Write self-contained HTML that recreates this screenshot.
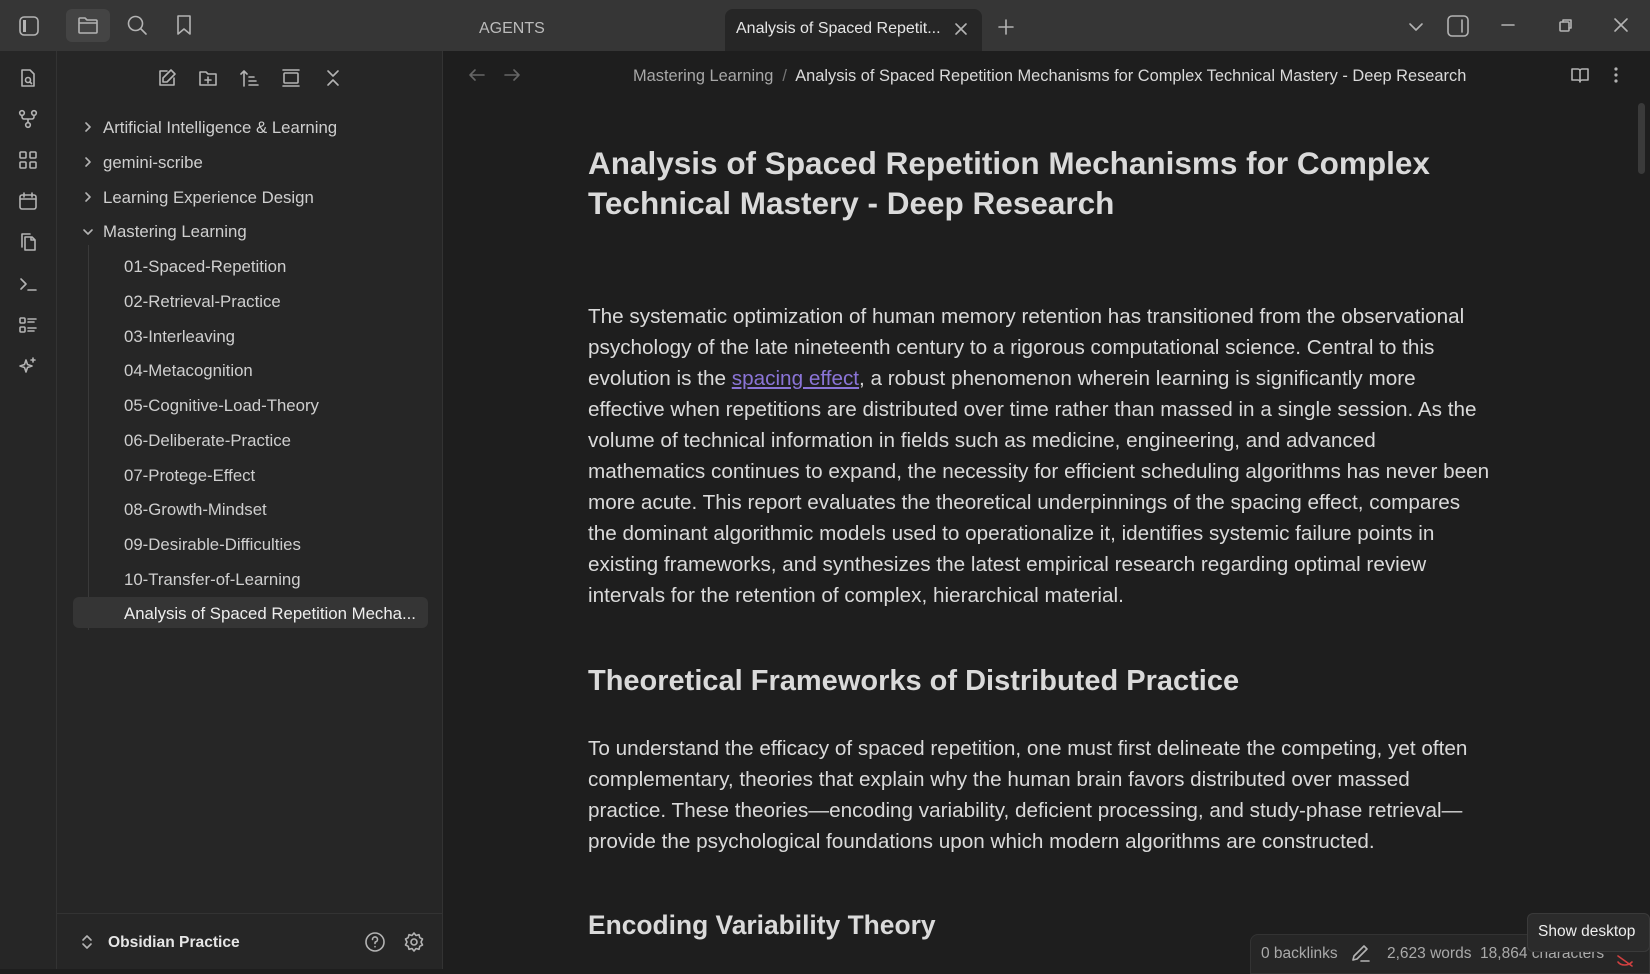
<!DOCTYPE html>
<html><head><meta charset="utf-8"><style>
*{margin:0;padding:0;box-sizing:border-box}
body{width:1650px;height:969px;overflow:hidden;background:#1e1e1e;font-family:"Liberation Sans",sans-serif;color:#dadada;position:relative}
.a{position:absolute;white-space:nowrap}
svg{position:absolute;fill:none;stroke:#b3b3b3;stroke-width:1.6;stroke-linecap:round;stroke-linejoin:round}
#top{position:absolute;left:0;top:0;width:1650px;height:51px;background:#363636}
#rib{position:absolute;left:0;top:51px;width:57px;height:918px;background:#262626;border-right:1px solid #333}
#side{position:absolute;left:57px;top:51px;width:386px;height:918px;background:#262626;border-right:1px solid #333}
.ft{position:absolute;font-size:16.8px;color:#cfcfcf;white-space:nowrap}
.p{font-size:20.7px;color:#dadada;line-height:31px}
</style></head><body>
<div id="top"></div>
<div class="a" style="left:66px;top:9px;width:44px;height:33px;background:#444;border-radius:6px"></div>
<svg style="left:18px;top:15px" width="22" height="22" viewBox="0 0 22 22"><rect x="2" y="2" width="18" height="18" rx="4"/><rect x="5" y="5" width="3" height="12" fill="#b3b3b3" stroke="none"/></svg>
<svg style="left:77px;top:14px" width="22" height="22" viewBox="0 0 22 22"><path d="M2 5a1 1 0 0 1 1-1h5l2 2h9a1 1 0 0 1 1 1v11a1 1 0 0 1-1 1H3a1 1 0 0 1-1-1z M2 9h18"/></svg>
<svg style="left:126px;top:14px" width="22" height="22" viewBox="0 0 22 22"><circle cx="9.5" cy="9.5" r="7"/><path d="M15 15l5 5"/></svg>
<svg style="left:173px;top:14px" width="22" height="22" viewBox="0 0 22 22"><path d="M5 2h12v18l-6-5-6 5z"/></svg>
<div class="a" style="left:479px;top:20px;font-size:16px;color:#bbb">AGENTS</div>
<div class="a" style="left:725px;top:9px;width:257px;height:42px;background:#262626;border-radius:8px 8px 0 0"></div>
<div class="a" style="left:736px;top:20px;font-size:16px;color:#e6e6e6">Analysis of Spaced Repetit...</div>
<svg style="left:953px;top:21px" width="16" height="16" viewBox="0 0 16 16"><path d="M3 3l10 10M13 3L3 13"/></svg>
<svg style="left:997px;top:18px" width="18" height="18" viewBox="0 0 18 18"><path d="M9 2v14M2 9h14"/></svg>
<svg style="left:1408px;top:19px" width="16" height="16" viewBox="0 0 16 16"><path d="M2 5l6 6 6-6"/></svg>
<svg style="left:1446px;top:14px" width="24" height="24" viewBox="0 0 24 24"><rect x="2" y="2" width="20" height="20" rx="4"/><path d="M16 6v12"/></svg>
<svg style="left:1500px;top:17px" width="16" height="16" viewBox="0 0 16 16"><path d="M2 8h12"/></svg>
<svg style="left:1558px;top:17px" width="16" height="16" viewBox="0 0 16 16"><rect x="2" y="5" width="9" height="9" rx="1"/><path d="M5 5V3h8v8h-2"/></svg>
<svg style="left:1612px;top:16px" width="18" height="18" viewBox="0 0 18 18"><path d="M3 3l12 12M15 3L3 15"/></svg>

<div id="rib"></div>
<svg style="left:18px;top:68px" width="20" height="20" viewBox="0 0 20 20"><path d="M4 2h8l4 4v12H4z"/><circle cx="10" cy="12" r="2.5"/><path d="M12 14l1.5 1.5"/></svg>
<svg style="left:18px;top:109px" width="20" height="20" viewBox="0 0 20 20"><circle cx="4" cy="4" r="2.3"/><circle cx="16" cy="4" r="2.3"/><circle cx="10" cy="16" r="2.3"/><path d="M4 6.5v1.5a2 2 0 0 0 2 2h8a2 2 0 0 0 2-2V6.5M10 10v3.7"/></svg>
<svg style="left:18px;top:150px" width="20" height="20" viewBox="0 0 20 20"><rect x="2" y="2" width="6" height="6" rx="1"/><rect x="12" y="2" width="6" height="6" rx="1"/><rect x="2" y="12" width="6" height="6" rx="1"/><rect x="12" y="12" width="6" height="6" rx="1"/></svg>
<svg style="left:18px;top:191px" width="20" height="20" viewBox="0 0 20 20"><rect x="2" y="4" width="16" height="14" rx="2"/><path d="M2 8h16M6 2v4M14 2v4"/></svg>
<svg style="left:18px;top:232px" width="20" height="20" viewBox="0 0 20 20"><path d="M7 5h7l3 3v10H7z M13 5v3h4 M4 15V2h8"/></svg>
<svg style="left:18px;top:274px" width="20" height="20" viewBox="0 0 20 20"><path d="M3 5l5 5-5 5M10 16h8"/></svg>
<svg style="left:18px;top:315px" width="20" height="20" viewBox="0 0 20 20"><rect x="2" y="3" width="5" height="5" rx="1"/><rect x="2" y="12" width="5" height="5" rx="1"/><path d="M10 4h8M10 7h6M10 13h8M10 16h6"/></svg>
<svg style="left:18px;top:356px" width="20" height="20" viewBox="0 0 20 20"><path d="M8 4l1.5 4.5L14 10l-4.5 1.5L8 16l-1.5-4.5L2 10l4.5-1.5z M15 2v4M13 4h4"/></svg>

<div id="side"></div>
<svg style="left:157px;top:68px" width="20" height="20" viewBox="0 0 20 20"><path d="M17 10v7H3V3h7 M14 2l4 4-8 8H6v-4z"/></svg>
<svg style="left:198px;top:68px" width="20" height="20" viewBox="0 0 20 20"><path d="M2 4h6l2 2h8v11H2z M10 9v6M7 12h6"/></svg>
<svg style="left:239px;top:68px" width="20" height="20" viewBox="0 0 20 20"><path d="M5 18V3M2 6l3-3 3 3M10 9h5M10 13h7M10 17h9"/></svg>
<svg style="left:281px;top:68px" width="20" height="20" viewBox="0 0 20 20"><path d="M2 2h16M2 18h16"/><rect x="3" y="5" width="14" height="10" rx="1"/></svg>
<svg style="left:323px;top:68px" width="20" height="20" viewBox="0 0 20 20"><path d="M5 3l5 5 5-5M5 17l5-5 5 5"/></svg>

<div class="a" style="left:88px;top:245px;width:1px;height:385px;background:#3a3a3a"></div>
<div class="a" style="left:73px;top:597px;width:355px;height:31px;background:#353535;border-radius:6px"></div>
<svg style="left:81px;top:120px" width="14" height="14" viewBox="0 0 14 14"><path d="M5 3l4 4-4 4"/></svg>
<svg style="left:81px;top:155px" width="14" height="14" viewBox="0 0 14 14"><path d="M5 3l4 4-4 4"/></svg>
<svg style="left:81px;top:190px" width="14" height="14" viewBox="0 0 14 14"><path d="M5 3l4 4-4 4"/></svg>
<svg style="left:81px;top:225px" width="14" height="14" viewBox="0 0 14 14"><path d="M3 5l4 4 4-4"/></svg>
<div class="ft" style="left:103px;top:118px">Artificial Intelligence &amp; Learning</div>
<div class="ft" style="left:103px;top:153px">gemini-scribe</div>
<div class="ft" style="left:103px;top:188px">Learning Experience Design</div>
<div class="ft" style="left:103px;top:222px">Mastering Learning</div>
<div class="ft" style="left:124px;top:257px">01-Spaced-Repetition</div>
<div class="ft" style="left:124px;top:292px">02-Retrieval-Practice</div>
<div class="ft" style="left:124px;top:327px">03-Interleaving</div>
<div class="ft" style="left:124px;top:361px">04-Metacognition</div>
<div class="ft" style="left:124px;top:396px">05-Cognitive-Load-Theory</div>
<div class="ft" style="left:124px;top:431px">06-Deliberate-Practice</div>
<div class="ft" style="left:124px;top:466px">07-Protege-Effect</div>
<div class="ft" style="left:124px;top:500px">08-Growth-Mindset</div>
<div class="ft" style="left:124px;top:535px">09-Desirable-Difficulties</div>
<div class="ft" style="left:124px;top:570px">10-Transfer-of-Learning</div>
<div class="ft" style="left:124px;top:604px;color:#eee">Analysis of Spaced Repetition Mecha...</div>
<div class="a" style="left:57px;top:913px;width:386px;height:1px;background:#333"></div>
<svg style="left:80px;top:934px" width="14" height="16" viewBox="0 0 14 16"><path d="M3 6l4-4 4 4M3 10l4 4 4-4"/></svg>
<div class="a" style="left:108px;top:934px;font-size:15.6px;font-weight:bold;color:#e6e6e6">Obsidian Practice</div>
<svg style="left:364px;top:931px" width="22" height="22" viewBox="0 0 22 22"><circle cx="11" cy="11" r="9"/><path d="M8.5 8.5a2.5 2.5 0 1 1 3 2.4c-.5.2-.5.6-.5 1.6M11 15.5v.2"/></svg>
<svg style="left:403px;top:931px" width="22" height="22" viewBox="0 0 22 22"><circle cx="11" cy="11" r="3"/><path d="M11 2l2 2.5 3-.8.8 3L19.5 8 18 11l1.5 3-2.7 1.3-.8 3-3-.8L11 20l-2-2.5-3 .8-.8-3L2.5 14 4 11 2.5 8l2.7-1.3.8-3 3 .8z"/></svg>

<svg style="left:468px;top:67px;stroke:#666" width="18" height="16" viewBox="0 0 18 16"><path d="M16 8H2M7 3L2 8l5 5"/></svg>
<svg style="left:503px;top:67px;stroke:#666" width="18" height="16" viewBox="0 0 18 16"><path d="M2 8h14M11 3l5 5-5 5"/></svg>
<div class="a" style="left:633px;top:67px;font-size:16.4px;color:#a8a8a8">Mastering Learning <span style="color:#777">&nbsp;/&nbsp;</span> <span style="color:#dadada">Analysis of Spaced Repetition Mechanisms for Complex Technical Mastery - Deep Research</span></div>
<svg style="left:1570px;top:66px" width="20" height="18" viewBox="0 0 20 18"><path d="M2 3h6a2 2 0 0 1 2 2v11a2 2 0 0 0-2-2H2z M18 3h-6a2 2 0 0 0-2 2v11a2 2 0 0 1 2-2h6z"/></svg>
<svg style="left:1610px;top:66px" width="12" height="18" viewBox="0 0 12 18"><circle cx="6" cy="3" r=".8" fill="#b3b3b3"/><circle cx="6" cy="9" r=".8" fill="#b3b3b3"/><circle cx="6" cy="15" r=".8" fill="#b3b3b3"/></svg>
<div class="a" style="left:1638px;top:103px;width:7px;height:71px;background:#3a3a3a;border-radius:4px"></div>

<div class="a" style="left:588px;top:143px;font-size:31.5px;font-weight:bold;line-height:40px;color:#dadada">Analysis of Spaced Repetition Mechanisms for Complex<br>Technical Mastery - Deep Research</div>
<div class="a p" style="left:588px;top:301px">The systematic optimization of human memory retention has transitioned from the observational<br>psychology of the late nineteenth century to a rigorous computational science. Central to this<br>evolution is the <span style="color:#8a74d6;text-decoration:underline">spacing effect</span>, a robust phenomenon wherein learning is significantly more<br>effective when repetitions are distributed over time rather than massed in a single session. As the<br>volume of technical information in fields such as medicine, engineering, and advanced<br>mathematics continues to expand, the necessity for efficient scheduling algorithms has never been<br>more acute. This report evaluates the theoretical underpinnings of the spacing effect, compares<br>the dominant algorithmic models used to operationalize it, identifies systemic failure points in<br>existing frameworks, and synthesizes the latest empirical research regarding optimal review<br>intervals for the retention of complex, hierarchical material.</div>
<div class="a" style="left:588px;top:665px;font-size:29px;font-weight:bold;color:#dadada">Theoretical Frameworks of Distributed Practice</div>
<div class="a p" style="left:588px;top:733px">To understand the efficacy of spaced repetition, one must first delineate the competing, yet often<br>complementary, theories that explain why the human brain favors distributed over massed<br>practice. These theories—encoding variability, deficient processing, and study-phase retrieval—<br>provide the psychological foundations upon which modern algorithms are constructed.</div>
<div class="a" style="left:588px;top:910px;font-size:26.4px;font-weight:bold;color:#dadada">Encoding Variability Theory</div>

<div class="a" style="left:1250px;top:934px;width:400px;height:40px;background:#262626;border:1px solid #333;border-radius:8px 0 0 0"></div>
<div class="a" style="left:1261px;top:945px;font-size:15.5px;color:#aaa">0 backlinks</div>
<svg style="left:1350px;top:943px" width="22" height="20" viewBox="0 0 22 20"><path d="M3 17l1-4L14 3l3 3L7 16z M11 18h8"/></svg>
<div class="a" style="left:1387px;top:945px;font-size:15.5px;color:#aaa">2,623 words &nbsp;18,864 characters</div>
<div class="a" style="left:1527px;top:913px;width:123px;height:39px;background:#2b2b2b;border:1px solid #3a3a3a;border-radius:6px"></div>
<div class="a" style="left:1538px;top:923px;font-size:15.5px;color:#eee">Show desktop</div>
<svg style="left:1615px;top:952px;stroke:#d04040" width="20" height="17" viewBox="0 0 20 17"><path d="M3 4l14 10M3 10c3 4 10 4 14 0"/></svg>
</body></html>
